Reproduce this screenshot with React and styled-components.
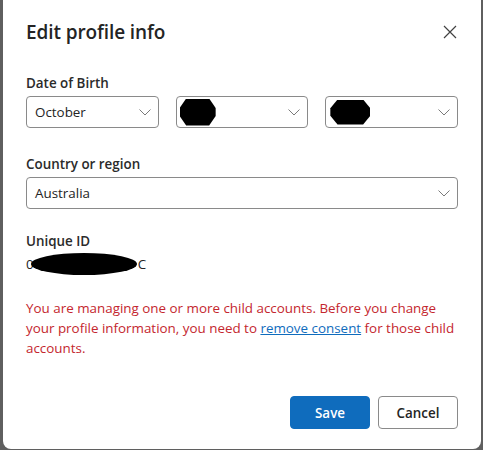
import React from 'react';
import styled, { createGlobalStyle } from 'styled-components';

const GlobalStyle = createGlobalStyle`
  html, body {
    margin: 0;
    padding: 0;
    background: #5f5f5f;
  }
  body {
    font-family: "Segoe UI", "Open Sans", sans-serif;
    color: #242424;
  }
`;

const Overlay = styled.div`
  width: 483px;
  height: 450px;
  padding: 0 2px 1px 3px;
  box-sizing: border-box;
  display: flex;
`;

const Dialog = styled.div`
  flex: 1;
  background: #fff;
  border-radius: 0 0 8px 8px;
  padding: 19px 23px 20px 23px;
  display: flex;
  flex-direction: column;
`;

const Header = styled.div`
  display: flex;
  align-items: center;
  justify-content: space-between;
  height: 26px;
  margin-bottom: 29px;
`;

const Title = styled.h2`
  margin: 0;
  font-size: 19px;
  font-weight: 600;
  color: #242424;
  letter-spacing: -0.1px;
`;

const CloseButton = styled.button`
  border: none;
  background: none;
  padding: 0;
  width: 20px;
  height: 20px;
  display: flex;
  align-items: center;
  justify-content: center;
  cursor: pointer;
  margin-right: -2px;
`;

const Field = styled.div`
  display: flex;
  flex-direction: column;
  margin-bottom: ${(p) => p.gap || 0}px;
`;

const Label = styled.label`
  font-size: 13.4px;
  font-weight: 600;
  color: #2b2b2b;
  line-height: 18px;
  margin-bottom: 4px;
`;

const SelectRow = styled.div`
  display: grid;
  grid-template-columns: repeat(3, 1fr);
  gap: 17px;
`;

const Select = styled.div`
  height: 32px;
  box-sizing: border-box;
  border: 1px solid #8a8a8a;
  border-radius: 4px;
  display: flex;
  align-items: center;
  justify-content: space-between;
  padding: 0 6px 0 8px;
  font-size: 13.4px;
  color: #242424;
`;

const Redacted = styled.span`
  display: inline-block;
  width: ${(p) => p.w}px;
  height: ${(p) => p.h}px;
  background: #000;
  clip-path: polygon(18% 0, 82% 0, 100% 35%, 100% 65%, 82% 100%, 18% 100%, 0 65%, 0 35%);
  margin-left: ${(p) => p.ml || 0}px;
`;

const IdValue = styled.div`
  display: flex;
  align-items: center;
  font-size: 13.4px;
  color: #242424;
  height: 20px;
`;

const IdBlob = styled.span`
  display: inline-block;
  width: 106px;
  height: 22px;
  background: #000;
  border-radius: 50%;
  margin: 0 1px 0 -3px;
`;

const Notice = styled.p`
  margin: 0;
  font-size: 13.4px;
  line-height: 20px;
  color: #c4262e;
`;

const Link = styled.a`
  color: #0f6cbd;
  text-decoration: underline;
  cursor: pointer;
`;

const Footer = styled.div`
  margin-top: auto;
  display: flex;
  justify-content: flex-end;
  gap: 8px;
`;

const Button = styled.button`
  height: 33px;
  width: 80px;
  border-radius: 4px;
  font-family: inherit;
  font-size: 13.4px;
  font-weight: 600;
  cursor: pointer;
  border: 1px solid ${(p) => (p.primary ? '#0f6cbd' : '#8a8a8a')};
  background: ${(p) => (p.primary ? '#0f6cbd' : '#fff')};
  color: ${(p) => (p.primary ? '#fff' : '#242424')};
`;

const Chevron = () => (
  <svg width="14" height="14" viewBox="0 0 14 14" fill="none">
    <path d="M1.5 4.5 L7 10 L12.5 4.5" stroke="#7a7a7a" strokeWidth="1" />
  </svg>
);

const CloseIcon = () => (
  <svg width="14" height="14" viewBox="0 0 14 14" fill="none">
    <path d="M1 1 L13 13 M13 1 L1 13" stroke="#424242" strokeWidth="1.2" />
  </svg>
);

const App = () => {
  return (
    <>
      <GlobalStyle />
      <Overlay>
        <Dialog>
          <Header>
            <Title>Edit profile info</Title>
            <CloseButton aria-label="Close">
              <CloseIcon />
            </CloseButton>
          </Header>

          <Field gap={27}>
            <Label>Date of Birth</Label>
            <SelectRow>
              <Select>
                <span>October</span>
                <Chevron />
              </Select>
              <Select>
                <Redacted w={36} h={27} ml={-5} />
                <Chevron />
              </Select>
              <Select>
                <Redacted w={40} h={25} ml={-4} />
                <Chevron />
              </Select>
            </SelectRow>
          </Field>

          <Field gap={23}>
            <Label>Country or region</Label>
            <Select>
              <span>Australia</span>
              <Chevron />
            </Select>
          </Field>

          <Field gap={24}>
            <Label>Unique ID</Label>
            <IdValue>
              <span>0</span>
              <IdBlob />
              <span>C</span>
            </IdValue>
          </Field>

          <Notice>
            You are managing one or more child accounts. Before you change your profile
            information, you need to <Link>remove consent</Link> for those child accounts.
          </Notice>

          <Footer>
            <Button primary>Save</Button>
            <Button>Cancel</Button>
          </Footer>
        </Dialog>
      </Overlay>
    </>
  );
};

export default App;
